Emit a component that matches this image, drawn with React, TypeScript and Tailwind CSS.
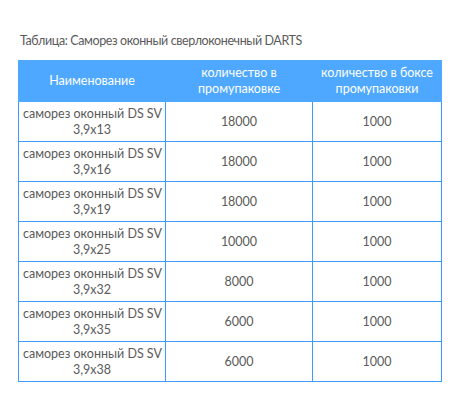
const rows = [
  ['3,9x13', '18000', '1000'],
  ['3,9x16', '18000', '1000'],
  ['3,9x19', '18000', '1000'],
  ['3,9x25', '10000', '1000'],
  ['3,9x32', '8000', '1000'],
  ['3,9x35', '6000', '1000'],
  ['3,9x38', '6000', '1000'],
];

export default function App() {
  return (
    <div className="w-[460px] h-[400px] bg-white pl-[18px] pt-[33px] text-[#5a5a5a] text-[12.5px] font-['Lato',sans-serif]">
      <p className="pl-[2px] h-[27px] leading-[16px] text-[12.5px] tracking-[-0.4px]">Таблица: Саморез оконный сверлоконечный DARTS</p>
      <table className="w-[423px] border-collapse text-center table-fixed">
        <colgroup>
          <col className="w-[147px]" />
          <col className="w-[147px]" />
          <col className="w-[129px]" />
        </colgroup>
        <thead>
          <tr className="h-[41px] bg-[#4ea8ff] text-white leading-[16px]">
            <th className="font-normal border border-[#4ea8ff] px-1 whitespace-nowrap">Наименование</th>
            <th className="font-normal border border-[#4ea8ff] px-1 whitespace-nowrap">
              количество в<br />промупаковке
            </th>
            <th className="font-normal border border-[#4ea8ff] px-1 whitespace-nowrap">
              количество в боксе<br />промупаковки
            </th>
          </tr>
        </thead>
        <tbody>
          {rows.map(([size, pack, box]) => (
            <tr key={size} className="h-[40px] leading-[16px]">
              <td className="border border-[#3d9bff] px-1 whitespace-nowrap">
                саморез оконный DS SV<br />{size}
              </td>
              <td className="border border-[#3d9bff]">{pack}</td>
              <td className="border border-[#3d9bff]">{box}</td>
            </tr>
          ))}
        </tbody>
      </table>
    </div>
  );
}
